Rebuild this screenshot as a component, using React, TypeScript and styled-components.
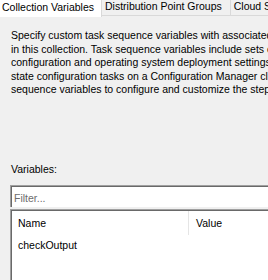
import React from 'react';
import styled, { createGlobalStyle } from 'styled-components';

const TABS = ['Collection Variables', 'Distribution Point Groups', 'Cloud Sync'];

const DESCRIPTION = [
  'Specify custom task sequence variables with associated values that are',
  'in this collection. Task sequence variables include sets of name and value',
  'configuration and operating system deployment settings for',
  'state configuration tasks on a Configuration Manager client.',
  'sequence variables to configure and customize the steps',
];

const GlobalStyle = createGlobalStyle`
  html, body {
    margin: 0;
    padding: 0;
    background: #f0f0f0;
  }
  body {
    font-family: 'Liberation Sans', Arial, sans-serif;
    font-size: 10.5px;
    color: #000;
  }
`;

const App: React.FC = () => (
  <>
    <GlobalStyle />
    <Window>
      <TabStrip>
        {TABS.map((tab, index) => (
          <Tab key={tab} selected={index === 0}>{tab}</Tab>
        ))}
      </TabStrip>
      <Page>
        <Description>
          {DESCRIPTION.map((line) => (
            <DescriptionLine key={line}>{line}</DescriptionLine>
          ))}
        </Description>
        <FieldLabel>Variables:</FieldLabel>
        <FilterBox>Filter...</FilterBox>
        <ListView>
          <ListHeader>
            <HeaderCell width={177}>Name</HeaderCell>
            <HeaderCell>Value</HeaderCell>
          </ListHeader>
          <ListRow>checkOutput</ListRow>
        </ListView>
      </Page>
    </Window>
  </>
);

export default App;

const Window = styled.div`
  width: 268px;
  height: 280px;
  overflow: hidden;
  display: flex;
  flex-direction: column;
  background: #f0f0f0;
`;

const TabStrip = styled.div`
  display: flex;
  height: 17px;
  flex-shrink: 0;
  white-space: nowrap;
`;

const Tab = styled.div<{ selected: boolean }>`
  display: flex;
  align-items: center;
  height: ${({ selected }) => (selected ? '17px' : '16px')};
  padding: ${({ selected }) => (selected ? '0 7px 3px 2px' : '0 8px 3px 3px')};
  background: ${({ selected }) => (selected ? '#ffffff' : '#f0f0f0')};
  border-right: 1px solid #d9d9d9;
  border-bottom: ${({ selected }) => (selected ? 'none' : '1px solid #d9d9d9')};
  box-sizing: border-box;
  line-height: 13px;
`;

const Page = styled.div`
  display: flex;
  flex-direction: column;
  padding: 12px 0 0 10px;
  flex: 1;
  min-height: 0;
`;

const Description = styled.div`
  padding-left: 1px;
  line-height: 13.5px;
  overflow: hidden;
`;

const DescriptionLine = styled.div`
  white-space: nowrap;
`;

const FieldLabel = styled.div`
  margin-top: 66px;
  padding-left: 1px;
  line-height: 13px;
`;

const FilterBox = styled.div`
  margin-top: 9px;
  height: 22px;
  box-sizing: border-box;
  border-top: 1px solid #a0a0a0;
  border-left: 1px solid #a0a0a0;
  box-shadow: inset 1px 1px 0 #696969;
  background: #fff;
  color: #6d6d6d;
  padding: 6px 0 0 3px;
  line-height: 13px;
`;

const ListView = styled.div`
  margin-top: 2px;
  flex: 1;
  background: #fff;
  border-top: 1px solid #a0a0a0;
  border-left: 1px solid #a0a0a0;
  box-shadow: inset 1px 1px 0 #696969;
  padding-top: 1px;
`;

const ListHeader = styled.div`
  display: flex;
  height: 24px;
  align-items: center;
`;

const HeaderCell = styled.div<{ width?: number }>`
  width: ${({ width }) => (width ? `${width}px` : 'auto')};
  padding-left: 7px;
  box-sizing: border-box;
  height: 24px;
  line-height: 24px;
  & + & {
    border-left: 1px solid #e5e5e5;
  }
`;

const ListRow = styled.div`
  padding-left: 7px;
  line-height: 20px;
`;
